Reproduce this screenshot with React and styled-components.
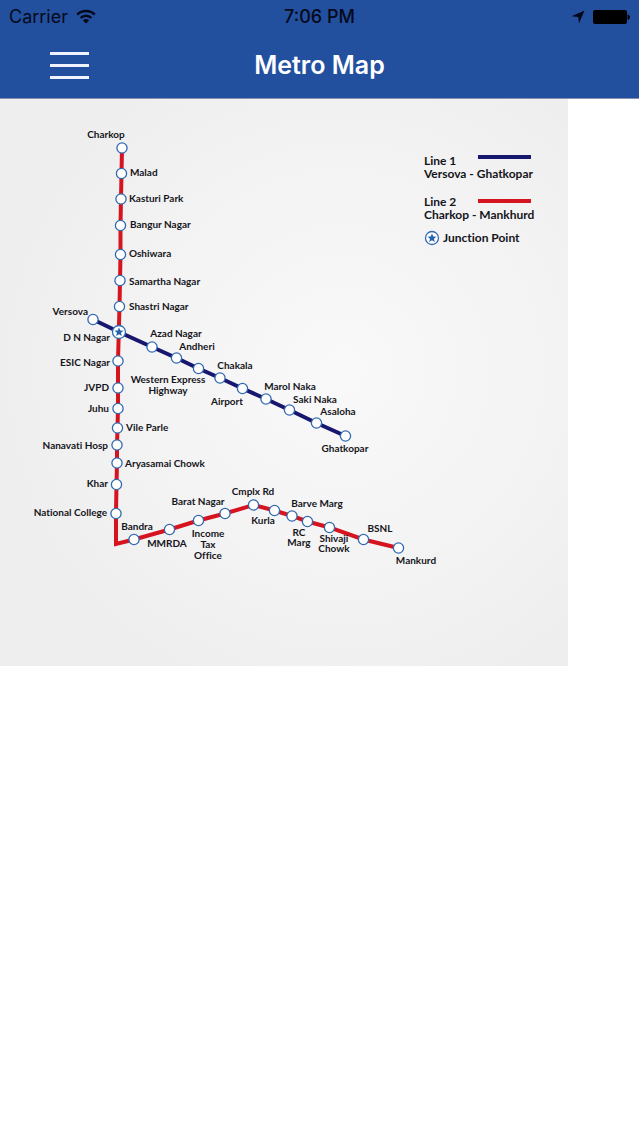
import styled, { createGlobalStyle } from "styled-components";

const GlobalStyles = createGlobalStyle`
  * {
    box-sizing: border-box;
  }
  body {
    margin: 0;
    background-color: #fff;
    font-family: Inter, "Liberation Sans", sans-serif;
  }
`;

const Header = styled.header`
  background-color: #234f9f;
  border-bottom: 1px solid #8791ae;
`;
const StatusBar = styled.div`
  display: grid;
  grid-template-columns: 1fr auto 1fr;
  align-items: center;
  height: 33px;
  padding: 0 9px;
  font-size: 18px;
  line-height: 33px;
  color: #04091a;
`;
const StatusGroup = styled.div`
  display: flex;
  align-items: center;
  justify-content: ${({ $end }) => ($end ? "flex-end" : "flex-start")};
  gap: 8px;
`;
const Clock = styled.time`
  font-weight: 500;
`;
const NavBar = styled.nav`
  display: grid;
  grid-template-columns: 1fr auto 1fr;
  align-items: center;
  height: 65px;
  padding: 0 50px;
`;
const MenuButton = styled.button`
  display: flex;
  flex-direction: column;
  justify-self: start;
  gap: 9px;
  width: 39px;
  padding: 0;
  border: 0;
  background: none;
  cursor: pointer;
`;
const MenuBar = styled.span`
  height: 3px;
  background-color: #eef3fd;
`;
const Title = styled.h1`
  margin: 0;
  font-size: 25px;
  font-weight: 600;
  line-height: 33px;
  color: #fff;
`;
const MapDrawing = styled.svg`
  display: block;
  width: calc(100% * 8 / 9);
`;
const Track = styled.polyline`
  fill: none;
  stroke: ${({ $color }) => $color};
  stroke-width: 4px;
`;
const Stop = styled.circle`
  fill: #fff;
  stroke: #3269b0;
  stroke-width: 1.3px;
`;
const Label = styled.text`
  font-family: Lato, "Liberation Sans", sans-serif;
  font-size: ${({ $legend }) => ($legend ? "12px" : "10px")};
  font-weight: 700;
  font-variant-ligatures: none;
  fill: #15151a;
`;

const BLUE = "#17176f";
const RED = "#d51420";

// x, y of the stop, then the label lines with their anchor and baseline
const line1 = [
  { x: 93, y: 220.5, name: ["Versova"], anchor: "end", lx: 88, ly: 216 },
  { x: 119, y: 233, junction: true, name: ["D N Nagar"], anchor: "end", lx: 110, ly: 242 },
  { x: 152, y: 248, name: ["Azad Nagar"], anchor: "middle", lx: 176, ly: 238 },
  { x: 176.5, y: 259, name: ["Andheri"], anchor: "middle", lx: 197, ly: 251 },
  { x: 198.5, y: 269.5, name: ["Western Express", "Highway"], anchor: "middle", lx: 168, ly: 284 },
  { x: 220, y: 279, name: ["Chakala"], anchor: "middle", lx: 235, ly: 270 },
  { x: 242.5, y: 289.5, name: ["Airport"], anchor: "middle", lx: 227, ly: 306 },
  { x: 266, y: 300, name: ["Marol Naka"], anchor: "middle", lx: 290, ly: 291 },
  { x: 289.5, y: 311, name: ["Saki Naka"], anchor: "middle", lx: 315, ly: 304 },
  { x: 316.5, y: 324, name: ["Asaloha"], anchor: "middle", lx: 338, ly: 316 },
  { x: 345.5, y: 337, name: ["Ghatkopar"], anchor: "middle", lx: 345, ly: 353 },
];

const line2 = [
  { x: 122, y: 49, name: ["Charkop"], anchor: "middle", lx: 106, ly: 39 },
  { x: 121.5, y: 74.5, name: ["Malad"], anchor: "start", lx: 130, ly: 77 },
  { x: 121, y: 100, name: ["Kasturi Park"], anchor: "start", lx: 129, ly: 103 },
  { x: 120.5, y: 126.5, name: ["Bangur Nagar"], anchor: "start", lx: 130, ly: 129 },
  { x: 120.5, y: 155.5, name: ["Oshiwara"], anchor: "start", lx: 129, ly: 158 },
  { x: 120, y: 181.5, name: ["Samartha Nagar"], anchor: "start", lx: 129, ly: 186 },
  { x: 119.5, y: 207.5, name: ["Shastri Nagar"], anchor: "start", lx: 129, ly: 211 },
  { x: 118, y: 262, name: ["ESIC Nagar"], anchor: "end", lx: 110, ly: 267 },
  { x: 118, y: 289, name: ["JVPD"], anchor: "end", lx: 109, ly: 292 },
  { x: 118, y: 309.5, name: ["Juhu"], anchor: "end", lx: 109, ly: 313 },
  { x: 117.5, y: 329, name: ["Vile Parle"], anchor: "start", lx: 126, ly: 332 },
  { x: 117, y: 346, name: ["Nanavati Hosp"], anchor: "end", lx: 108, ly: 350 },
  { x: 117, y: 364, name: ["Aryasamai Chowk"], anchor: "start", lx: 125, ly: 368 },
  { x: 116.5, y: 385.5, name: ["Khar"], anchor: "end", lx: 108, ly: 388 },
  { x: 116, y: 414.5, name: ["National College"], anchor: "end", lx: 107, ly: 417 },
  { x: 134, y: 440.5, name: ["Bandra"], anchor: "middle", lx: 137, ly: 431 },
  { x: 169.5, y: 430.5, name: ["MMRDA"], anchor: "middle", lx: 167, ly: 448 },
  { x: 198.5, y: 421.5, name: ["Income", "Tax", "Office"], anchor: "middle", lx: 208, ly: 438 },
  { x: 225, y: 414.5, name: ["Barat Nagar"], anchor: "middle", lx: 198, ly: 406 },
  { x: 253.5, y: 406, name: ["Cmplx Rd"], anchor: "middle", lx: 253, ly: 396 },
  { x: 274.5, y: 411.5, name: ["Kurla"], anchor: "middle", lx: 263, ly: 425 },
  { x: 292, y: 417, name: ["Barve Marg"], anchor: "middle", lx: 317, ly: 408 },
  { x: 307.5, y: 422.5, name: ["RC", "Marg"], gap: 10, anchor: "middle", lx: 299, ly: 437 },
  { x: 329.5, y: 428.5, name: ["Shivaji", "Chowk"], gap: 10, anchor: "middle", lx: 334, ly: 443 },
  { x: 363.5, y: 440.5, name: ["BSNL"], anchor: "middle", lx: 380, ly: 433 },
  { x: 398.5, y: 449, name: ["Mankurd"], anchor: "middle", lx: 416, ly: 465 },
];

const toPoints = (stops) => stops.map(({ x, y }) => `${x},${y}`).join(" ");

const Junction = ({ x, y }) => (
  <g transform={`translate(${x} ${y})`}>
    <Stop r="6.5" />
    <path
      d="M0-4.6 1.3-1.5 4.5-1.3 2 .8 2.8 4 0 2.2-2.8 4-2 .8-4.5-1.3-1.3-1.5Z"
      fill="#2463ab"
    />
  </g>
);

const Station = ({ x, y, junction, name, gap = 11, anchor, lx, ly }) => (
  <g>
    {junction ? <Junction x={x} y={y} /> : <Stop cx={x} cy={y} r="5.1" />}
    {name.map((line, i) => (
      <Label key={line} x={lx} y={ly + i * gap} textAnchor={anchor}>
        {line}
      </Label>
    ))}
  </g>
);

const MetroMap = () => (
  <MapDrawing viewBox="0 0 568 567" role="img" aria-label="Metro Map">
    <defs>
      <radialGradient id="paper" cx="0.6" cy="0.48" r="0.62">
        <stop offset="0" stopColor="#f9f9fa" />
        <stop offset="0.5" stopColor="#f4f4f5" />
        <stop offset="1" stopColor="#eeeeef" />
      </radialGradient>
    </defs>
    <rect width="568" height="567" fill="url(#paper)" />

    <Track
      $color={RED}
      points={`${toPoints(line2.slice(0, 15))} 116,445 ${toPoints(line2.slice(15))}`}
    />
    <Track $color={BLUE} points={toPoints(line1)} />
    {line2.map((stop) => (
      <Station key={stop.name[0]} {...stop} />
    ))}
    {line1.map((stop) => (
      <Station key={stop.name[0]} {...stop} />
    ))}

    <Label $legend x="424" y="66">Line 1</Label>
    <Track $color={BLUE} points="478,58 531,58" />
    <Label $legend x="424" y="79">Versova - Ghatkopar</Label>
    <Label $legend x="424" y="107">Line 2</Label>
    <Track $color={RED} points="478,102 531,102" />
    <Label $legend x="424" y="120">Charkop - Mankhurd</Label>
    <Junction x={432} y={139} />
    <Label $legend x="443" y="143">Junction Point</Label>
  </MapDrawing>
);

const WifiIcon = () => (
  <svg width="20" height="16" viewBox="0 0 20 16" aria-hidden="true">
    <g fill="none" stroke="#04091a" strokeWidth="2.4">
      <path d="M1.2 5.6a12.5 12.5 0 0 1 17.6 0" />
      <path d="M4.6 9a7.7 7.7 0 0 1 10.8 0" />
    </g>
    <path d="M6.9 11.4a4.5 4.5 0 0 1 6.2 0L10 14.6Z" fill="#04091a" />
  </svg>
);

const LocationIcon = () => (
  <svg width="14" height="14" viewBox="0 0 14 14" aria-hidden="true">
    <path d="M13.5.5 8 13.5 7.200 7 .5 6.200Z" fill="#04091a" />
  </svg>
);

const BatteryIcon = () => (
  <svg width="37" height="16" viewBox="0 0 37 16" aria-hidden="true">
    <rect x="0" y="1" width="34" height="14" rx="2" fill="#000" />
    <path d="M34.600 5.300c3 1 3 4.800 0 5.800Z" fill="#000" />
  </svg>
);

export const App = () => {
  return (
    <>
      <GlobalStyles />
      <Header>
        <StatusBar>
          <StatusGroup>
            <span>Carrier</span>
            <WifiIcon />
          </StatusGroup>
          <Clock>7:06 PM</Clock>
          <StatusGroup $end>
            <LocationIcon />
            <BatteryIcon />
          </StatusGroup>
        </StatusBar>
        <NavBar>
          <MenuButton type="button" aria-label="Menu">
            <MenuBar />
            <MenuBar />
            <MenuBar />
          </MenuButton>
          <Title>Metro Map</Title>
        </NavBar>
      </Header>
      <main>
        <MetroMap />
      </main>
    </>
  );
};

export default App;
